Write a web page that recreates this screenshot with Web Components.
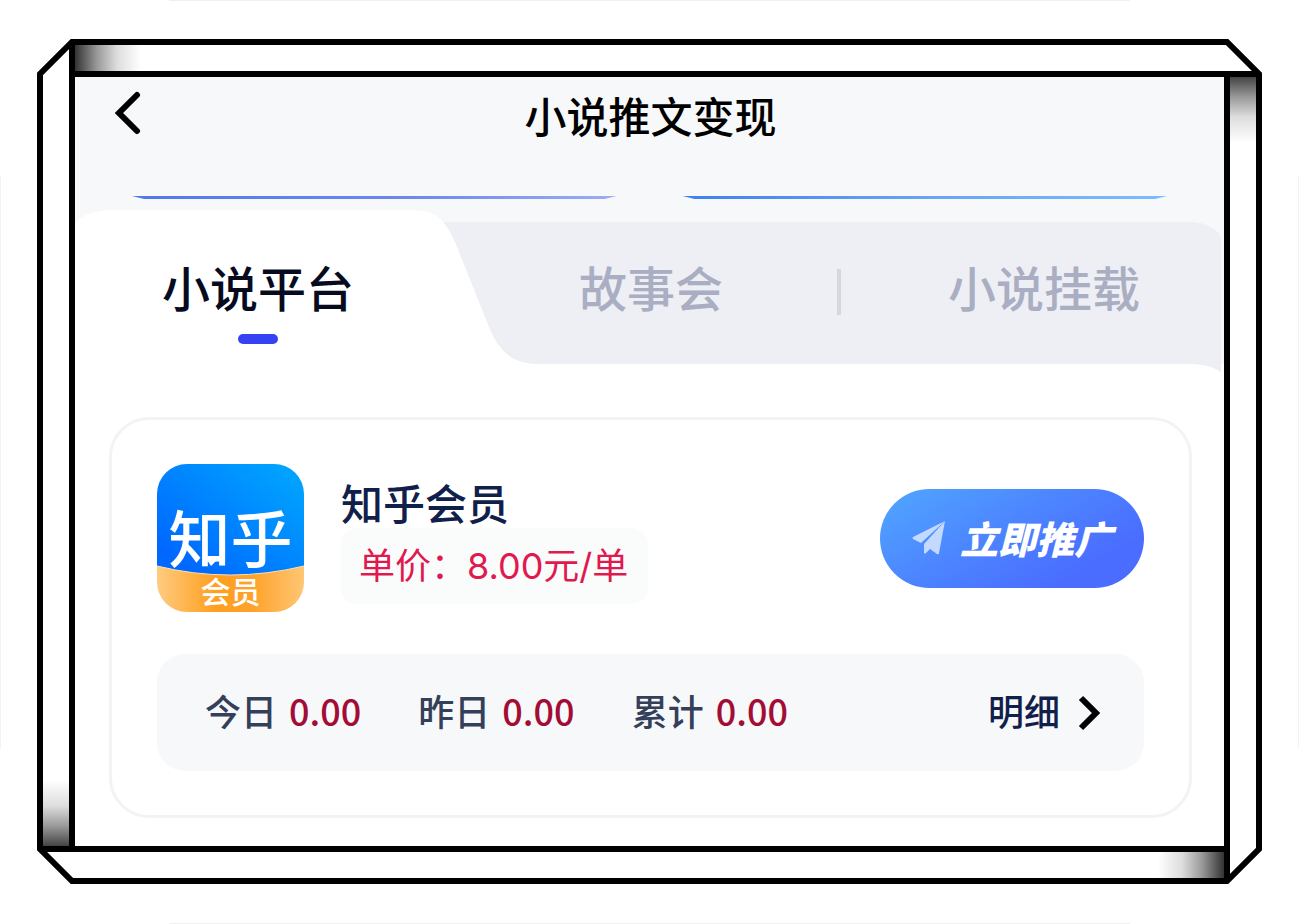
<!DOCTYPE html>
<html lang="zh-CN">
<head>
    <meta charset="utf-8">
    <meta name="viewport" content="width=device-width, initial-scale=1">
    <title>小说推文变现</title>
    <style>
        body {
            margin: 0;
            font-family: "Noto Sans CJK SC", sans-serif;
            font-weight: 500;
            color: #000;
            background: #fff;
        }
    </style>
</head>
<body>
    <bevel-frame>
        <page-header title-text="小说推文变现"></page-header>
        <banner-edges></banner-edges>
        <tab-bar tabs="小说平台,故事会,小说挂载"></tab-bar>
        <main-panel>
            <platform-card name="知乎会员" price="单价：8.00元/单">
                <app-logo slot="logo"></app-logo>
                <promote-button slot="action">立即推广</promote-button>
                <stat-item slot="stats" label="今日" value="0.00"></stat-item>
                <stat-item slot="stats" label="昨日" value="0.00"></stat-item>
                <stat-item slot="stats" label="累计" value="0.00"></stat-item>
            </platform-card>
        </main-panel>
    </bevel-frame>

    <script>
        /**
         * Base: renders the markup returned by render() in an open shadow root
         */
        class BaseElement extends HTMLElement {
            constructor() {
                super();
                this.attachShadow({mode: 'open'});
            }

            connectedCallback() {
                this.shadowRoot.innerHTML = this.render();
            }
        }

        /**
         * Beveled frame: four rails and four corners, each one a rotation of the first
         */
        class BevelFrame extends BaseElement {
            render() {
                const corner = `<path d="M35 3V38M38 3H35L3 35V38M35 35H38" fill="none" stroke="#000" stroke-width="6"/>`;
                return `
                    <style>
                        :host {
                            display: block;
                            box-sizing: border-box;
                            min-height: 100vh;
                            padding: 39px 37px 40px;
                            background:
                                linear-gradient(#f0f0f0, #f0f0f0) 50% 0 / 74% 1px no-repeat,
                                linear-gradient(#f0f0f0, #f0f0f0) 50% 100% / 74% 1px no-repeat,
                                linear-gradient(#f3f3f3, #f3f3f3) 0 50% / 1px 62% no-repeat,
                                linear-gradient(#f3f3f3, #f3f3f3) 100% 50% / 1px 62% no-repeat;
                        }
                        .frame {
                            display: grid;
                            grid-template-columns: 38px minmax(0, 1fr) 38px;
                            grid-template-rows: 38px auto 38px;
                        }
                        svg { display: block; }
                        .tr { transform: rotate(90deg); }
                        .br { transform: rotate(180deg); }
                        .bl { transform: rotate(270deg); }
                        .rail { border: 0 solid #000; }
                        .row { border-width: 6px 0; }
                        .col { border-width: 0 6px; }
                        .top { background: linear-gradient(90deg, #333, #999 22px, #ddd 42px, #fff 66px); }
                        .right { background: linear-gradient(180deg, #444, #999 20px, #ddd 40px, #fff 66px); }
                        .bottom { background: linear-gradient(270deg, #333, #999 22px, #ddd 42px, #fff 66px); }
                        .left { background: linear-gradient(0deg, #444, #999 20px, #ddd 40px, #fff 66px); }
                    </style>
                    <div class="frame">
                        <svg class="tl" width="38" height="38">${corner}</svg>
                        <div class="rail row top"></div>
                        <svg class="tr" width="38" height="38">${corner}</svg>
                        <div class="rail col left"></div>
                        <div class="content"><slot></slot></div>
                        <div class="rail col right"></div>
                        <svg class="bl" width="38" height="38">${corner}</svg>
                        <div class="rail row bottom"></div>
                        <svg class="br" width="38" height="38">${corner}</svg>
                    </div>`;
            }
        }

        class PageHeader extends BaseElement {
            render() {
                return `
                    <style>
                        :host { display: block; background: #f6f8fa; }
                        header {
                            display: grid;
                            grid-template-columns: 40px 1fr 40px;
                            align-items: start;
                            height: 80px;
                            padding: 0 31px 0 33px;
                            box-sizing: border-box;
                        }
                        button {
                            padding: 14px 0 0;
                            border: 0;
                            background: none;
                            cursor: pointer;
                        }
                        svg { display: block; margin: auto; }
                        h1 {
                            margin: 0;
                            padding-top: 10px;
                            font-size: 42px;
                            font-weight: 500;
                            line-height: 56px;
                            text-align: center;
                        }
                    </style>
                    <header>
                        <button type="button" aria-label="返回">
                            <svg width="26" height="44" viewBox="0 0 26 44">
                                <path d="M22 4L4 22L22 40" fill="none" stroke="#000" stroke-width="6" stroke-linecap="round"/>
                            </svg>
                        </button>
                        <h1>${this.getAttribute('title-text')}</h1>
                    </header>`;
            }
        }

        /**
         * Bottom edges of the two banners scrolled under the header
         */
        class BannerEdges extends BaseElement {
            render() {
                return `
                    <style>
                        :host {
                            display: grid;
                            grid-template-columns: 1fr 1fr;
                            gap: 66px;
                            padding: 39px 57px 11px;
                            background: #f6f8fa;
                        }
                        div {
                            height: 3px;
                            clip-path: polygon(0 0, 100% 0, calc(100% - 12px) 100%, 12px 100%);
                        }
                        .first { background: linear-gradient(90deg, #5078ec, #6f8af0 60%, #9dadf4); }
                        .second { background: linear-gradient(90deg, #3f80f2, #6aa3f3 50%, #7cbcff); }
                    </style>
                    <div class="first"></div>
                    <div class="second"></div>`;
            }
        }

        class TabBar extends BaseElement {
            render() {
                const [first, second, third] = this.getAttribute('tabs').split(',');
                return `
                    <style>
                        :host {
                            display: block;
                            position: relative;
                            background: #f6f8fa;
                        }
                        .track {
                            position: absolute;
                            inset: 12px 3px -20px 200px;
                            background: #eeeff4;
                            border-radius: 0 32px 0 0 / 0 18px 0 0;
                        }
                        svg { position: absolute; left: 0; top: 0; }
                        nav {
                            position: relative;
                            display: grid;
                            grid-template-columns: auto 1fr auto 1fr auto;
                            align-items: center;
                            height: 154px;
                            padding: 0 84px 0 87px;
                        }
                        button {
                            padding: 24px 0 0;
                            border: 0;
                            background: none;
                            color: #a9aec2;
                            font: inherit;
                            font-size: 48px;
                            line-height: 64px;
                            cursor: pointer;
                            display: grid;
                            justify-items: center;
                            gap: 16px;
                        }
                        button::after {
                            content: "";
                            width: 40px;
                            height: 10px;
                            border-radius: 5px;
                        }
                        button[aria-selected="true"] { color: #070b1e; }
                        button[aria-selected="true"]::after { background: #3442f4; }
                        .divider {
                            justify-self: center;
                            width: 4px;
                            height: 46px;
                            margin: 10px 0 0 8px;
                            background: #d5d7dc;
                        }
                        .second { grid-column: 3; }
                    </style>
                    <div class="track"></div>
                    <svg width="462" height="155" viewBox="0 0 462 155">
                        <path d="M0 155V14Q10 0 40 0H335C360 0 369 8 380 32L412 112C422 138 434 154 462 154V155Z" fill="#fff"/>
                    </svg>
                    <nav role="tablist">
                        <button type="button" role="tab" aria-selected="true">${first}</button>
                        <button type="button" role="tab" aria-selected="false" class="second">${second}</button>
                        <span class="divider"></span>
                        <button type="button" role="tab" aria-selected="false">${third}</button>
                    </nav>`;
            }
        }

        class MainPanel extends BaseElement {
            render() {
                return `
                    <style>
                        :host {
                            display: block;
                            position: relative;
                            padding: 53px 32px 28px 34px;
                            background: #fff;
                            border-radius: 0 36px 0 0 / 0 14px 0 0;
                        }
                    </style>
                    <slot></slot>`;
            }
        }

        class PlatformCard extends BaseElement {
            render() {
                return `
                    <style>
                        :host {
                            display: block;
                            padding: 44px 45px;
                            border: 3px solid #f2f3f5;
                            border-radius: 40px;
                        }
                        .top {
                            display: flex;
                            gap: 37px;
                            min-height: 148px;
                        }
                        .info { flex: 1; padding-top: 12px; }
                        h2 {
                            margin: 0;
                            color: #10204a;
                            font-size: 42px;
                            font-weight: 500;
                            line-height: 52px;
                        }
                        .price {
                            display: inline-block;
                            box-sizing: border-box;
                            height: 76px;
                            margin: 0;
                            padding: 0 20px 0 18px;
                            border-radius: 16px;
                            background: #fafbfb;
                            color: #e0194f;
                            font-family: Inter, "Noto Sans CJK SC", sans-serif;
                            font-size: 36px;
                            font-weight: 400;
                            line-height: 76px;
                        }
                        .action { align-self: center; }
                        .bottom {
                            display: flex;
                            align-items: center;
                            gap: 57px;
                            height: 112px;
                            margin-top: 42px;
                            padding: 0 44px 5px 48px;
                            border-radius: 28px;
                            background: #f6f8fa;
                        }
                        a {
                            display: flex;
                            align-items: center;
                            gap: 18px;
                            margin-left: auto;
                            color: #10204a;
                            font-size: 36px;
                            line-height: 52px;
                            text-decoration: none;
                        }
                        a svg { padding-top: 5px; }
                    </style>
                    <div class="top">
                        <slot name="logo"></slot>
                        <div class="info">
                            <h2>${this.getAttribute('name')}</h2>
                            <p class="price">${this.getAttribute('price')}</p>
                        </div>
                        <div class="action"><slot name="action"></slot></div>
                    </div>
                    <div class="bottom">
                        <slot name="stats"></slot>
                        <a href="#detail">明细
                            <svg width="22" height="36" viewBox="0 0 22 36">
                                <path d="M3 3L18 18L3 33" fill="none" stroke="#000" stroke-width="6"/>
                            </svg>
                        </a>
                    </div>`;
            }
        }

        class AppLogo extends BaseElement {
            render() {
                return `
                    <style>
                        :host {
                            display: block;
                            position: relative;
                            width: 147px;
                            height: 148px;
                            border-radius: 30px;
                            overflow: hidden;
                            color: #fff;
                            text-align: center;
                        }
                        svg { position: absolute; left: 0; top: 0; }
                        .name, .tag { display: block; position: relative; }
                        .name { padding-top: 37px; font-size: 62px; line-height: 70px; }
                        .tag { padding-top: 4px; font-size: 30px; line-height: 30px; }
                    </style>
                    <svg width="147" height="148" viewBox="0 0 147 148">
                        <defs>
                            <linearGradient id="sky" x1="0" y1="1" x2="1" y2="0">
                                <stop offset="0.15" stop-color="#0068ff"/>
                                <stop offset="0.9" stop-color="#00a2ff"/>
                            </linearGradient>
                            <linearGradient id="gold">
                                <stop offset="0" stop-color="#ffcb80"/>
                                <stop offset="0.4" stop-color="#ff9f1f"/>
                                <stop offset="0.65" stop-color="#ffa22a"/>
                                <stop offset="1" stop-color="#ffc674"/>
                            </linearGradient>
                        </defs>
                        <rect width="147" height="116" fill="url(#sky)"/>
                        <path d="M0 102Q73 120 147 102V148H0Z" fill="url(#gold)"/>
                        <path d="M0 102Q73 120 147 102" fill="none" stroke="#ffe0b0" stroke-width="1"/>
                        <path d="M46 92H64L54 102L50 96Z" fill="#fff"/>
                    </svg>
                    <span class="name">知乎</span>
                    <span class="tag">会员</span>`;
            }
        }

        class PromoteButton extends BaseElement {
            render() {
                return `
                    <style>
                        :host { display: block; }
                        button {
                            display: flex;
                            align-items: center;
                            gap: 14px;
                            height: 99px;
                            padding: 0 32px;
                            border: 0;
                            border-radius: 50px;
                            background: linear-gradient(150deg, #4f9fff 10%, #4c84ff 45%, #4a6cff 80%);
                            color: #fff;
                            font: inherit;
                            font-size: 38px;
                            font-weight: 900;
                            font-style: italic;
                            line-height: 56px;
                            white-space: nowrap;
                            cursor: pointer;
                        }
                    </style>
                    <button type="button">
                        <svg width="34" height="34" viewBox="0 0 34 34" fill="#c4d9ff">
                            <path d="M33 0L1 16Q0 17 1 18L9 22Z"/>
                            <path d="M33 0L12 23V32Q13 33 14 32L18 28L25 33Q27 34 27 32Z"/>
                        </svg>
                        <slot></slot>
                    </button>`;
            }
        }

        class StatItem extends BaseElement {
            render() {
                return `
                    <style>
                        :host {
                            display: flex;
                            align-items: baseline;
                            gap: 12px;
                            color: #344059;
                            font-size: 36px;
                            line-height: 52px;
                            white-space: nowrap;
                        }
                        .value { color: #a30d35; }
                    </style>
                    <span>${this.getAttribute('label')}</span>
                    <span class="value">${this.getAttribute('value')}</span>`;
            }
        }

        customElements.define('bevel-frame', BevelFrame);
        customElements.define('page-header', PageHeader);
        customElements.define('banner-edges', BannerEdges);
        customElements.define('tab-bar', TabBar);
        customElements.define('main-panel', MainPanel);
        customElements.define('platform-card', PlatformCard);
        customElements.define('app-logo', AppLogo);
        customElements.define('promote-button', PromoteButton);
        customElements.define('stat-item', StatItem);
    </script>
</body>
</html>
